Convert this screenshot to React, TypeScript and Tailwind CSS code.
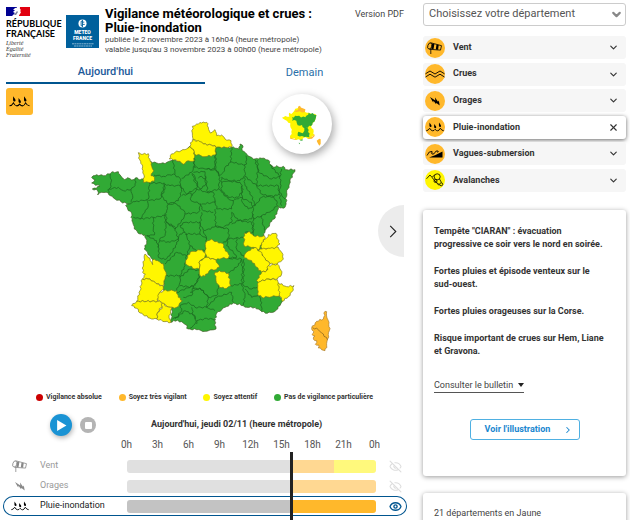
import type { ReactNode } from "react"
import { ChevronDown, ChevronRight, Eye, EyeOff, X } from "lucide-react"

type Pt = [number, number]

const GREEN = "#31aa35"
const YELLOW = "#fff600"
const ORANGE = "#ffb82b"

const FRANCE =
  "20,265 35,257 55,260 74,255 78,251 100,248 108,262 118,272 128,266 140,273 152,266 160,271 175,270 190,240 197,217 215,222 240,224 258,215 264,213 285,217 315,172 328,188 340,180 393,172 440,175 455,178 463,180 465,165 472,168 472,185 485,195 495,203 505,210 520,210 530,208 550,213 558,228 565,235 575,230 582,235 595,232 600,242 630,242 615,275 612,290 605,310 603,340 600,355 585,357 580,352 578,364 568,390 555,400 553,412 540,425 537,440 530,480 550,530 560,590 585,620 592,637 585,650 570,667 547,673 530,668 520,660 510,655 485,655 475,650 445,642 420,655 395,673 389,695 393,720 375,723 360,727 335,722 315,720 305,718 305,708 290,698 265,694 258,700 262,655 235,600 240,550 203,512 195,500 178,480 185,460 180,438 165,435 148,420 143,400 138,385 140,372 130,365 122,350 130,345 108,338 90,330 76,320 70,312 50,310 38,318 38,305 22,300 45,292 20,282 30,272"

const YELLOW_AREAS = [
  // Manche, Seine-Maritime, Nord, Pas-de-Calais, Somme
  "160,191 168,196 190,194 190,205 196,217 200,232 206,245 198,260 208,265 207,277 190,280 175,280 174,270 178,264 174,245 172,228 164,212",
  "253,210 256,200 270,190 300,182 315,172 328,188 328,215 303,218 295,226 285,217 265,213",
  "322,112 335,105 350,102 365,100 370,115 376,132 390,122 395,140 410,138 420,150 438,155 440,175 393,175 390,170 355,165 325,152 322,132",
  "322,152 345,158 355,165 390,170 393,175 390,198 360,203 328,195 328,188 315,172",
  // Sud-Ouest
  "180,495 195,508 203,527 203,512 218,515 235,525 240,545 243,550 240,570 235,590 215,585 195,570 172,570 181,555 173,550 175,525",
  "172,570 195,570 215,585 235,592 235,600 222,615 218,637 155,637 165,605",
  "222,613 235,605 265,605 275,605 280,625 292,635 275,655 262,655 245,652 225,637 218,632",
  "155,637 218,637 228,640 232,650 218,670 215,690 200,690 165,672 155,658 140,650",
  "232,642 245,652 262,655 252,680 258,700 240,698 215,690 218,670 230,660",
  // Massif central
  "302,515 315,490 345,483 362,490 358,508 345,515 343,540 330,540 302,525",
  "360,485 363,460 380,450 390,458 412,463 420,480 433,500 430,508 410,508 393,513 365,505",
  "345,515 365,505 393,513 403,535 390,543 375,543 360,562 345,560 343,540",
  "390,550 403,545 430,553 437,590 425,598 403,595 393,575",
  // Alpes
  "478,433 495,428 505,440 530,443 537,440 540,450 525,475 520,483 505,475 477,470",
  "528,472 535,452 545,447 550,437 573,433 577,450 585,465 575,475 555,480 530,480",
  "525,480 555,478 580,475 590,490 595,510 577,525 555,525 540,508 522,490",
  "500,478 510,475 525,487 540,508 555,525 545,545 530,550 510,530 500,515 478,507 480,495",
  "545,545 550,530 577,525 587,543 590,555 577,570 545,570 520,580 515,575 530,550",
  "518,595 520,580 545,570 577,572 580,582 590,610 585,620 560,623 530,625 518,615",
  "580,582 605,593 627,590 625,603 610,623 592,637 583,615",
]

const CORSE =
  "720,667 725,668 726,687 732,700 733,725 728,750 725,770 720,785 700,777 701,768 691,766 695,755 685,750 690,741 681,736 686,727 680,717 695,697 715,690"

const BORDERS = [
  "76,255 78,280 75,298 68,303 72,312",
  "72,300 100,295 115,305 138,302 150,290 152,268",
  "138,302 143,320 138,340",
  "193,280 190,330 185,332 150,338 130,345",
  "185,332 190,350 180,370 165,390 145,385",
  "195,282 238,282 240,300 225,330 190,335",
  "207,258 235,262 265,255 285,268 287,290 255,290 240,285",
  "264,213 270,255",
  "328,215 325,240 320,250 290,268",
  "240,285 228,320 250,345 280,335 290,308 287,290",
  "285,290 305,315 335,298 338,285 325,255",
  "165,390 205,385 240,380 245,365 250,345",
  "250,345 275,345 300,370 295,390 270,420 245,400 243,375",
  "290,320 318,312 318,335 348,345 340,370 300,375",
  "205,385 205,420 208,438 185,440",
  "238,382 243,405 240,440 225,448 218,475",
  "243,400 268,412 280,450 255,460 225,455",
  "280,450 285,435 300,430 285,410 300,400 345,400",
  "185,440 215,455 222,480 220,505 240,512 255,500 275,465 280,450",
  "300,430 305,440 315,470 305,500 275,490 240,525",
  "300,435 345,435 365,450 360,485 335,485 315,470",
  "345,400 345,435",
  "305,500 300,530 285,560 240,560",
  "285,560 285,580 275,605",
  "285,565 315,540 345,545 340,570 325,595 285,590",
  "275,610 325,590 320,620 295,625",
  "330,590 345,560",
  "400,590 395,620 370,625 345,597 320,600",
  "315,610 345,597 370,625 365,655 330,655 310,640 285,650",
  "365,655 375,645 395,625 440,610 445,640",
  "365,655 390,665",
  "393,692 365,688 335,695 330,705 315,718",
  "270,690 300,665 330,680 335,705",
  "320,655 325,680 330,690",
  "285,650 290,665 275,685 262,690",
  "350,108 355,125 380,140 395,150 393,172",
  "328,200 328,235 360,240 390,240 390,200",
  "393,178 392,215 392,240 405,260 415,250 420,235 437,220 440,175",
  "437,218 475,228 485,225 483,200",
  "478,228 480,260 465,275 430,275 410,265",
  "480,262 515,290 518,240 510,212",
  "517,213 520,250 560,270 585,262 555,228",
  "590,240 585,262 588,290 583,310 600,330",
  "515,290 580,290 582,315 560,325 530,315 515,290",
  "583,315 590,350",
  "510,350 530,325 560,320 575,335 578,352",
  "478,265 480,290 500,320 510,350 490,360 472,340 470,290",
  "410,265 410,280 430,276 465,280 475,300 460,325 430,325 410,305 410,280",
  "365,240 395,245 405,265 400,300 368,310 362,260",
  "325,250 360,248 362,265 360,290 345,300 330,280 322,252",
  "340,268 350,262 362,270",
  "322,320 335,300 365,310 385,310 390,340 350,345",
  "400,300 410,310 430,330 445,335 440,360 395,360 390,335",
  "445,335 465,325 500,340 505,365 500,390 460,395 440,370",
  "390,360 392,412",
  "440,370 440,400 415,415 392,412",
  "345,345 355,365 385,370",
  "392,412 360,425 345,410 350,370",
  "355,425 365,450",
  "392,412 430,420 432,450 412,463",
  "440,405 460,395 500,400 505,430 480,430",
  "475,445 432,450",
  "505,375 505,440",
  "505,390 530,380 560,365 575,352",
  "530,380 535,410 540,425",
  "430,445 425,470 445,490 455,505 430,508",
  "455,447 455,480 478,505",
  "430,508 470,510 460,530 430,553",
  "470,510 472,545 470,585 437,590",
  "477,510 475,590 500,600 518,595",
  "470,585 480,620 475,648",
  "480,600 500,625 520,620 527,630 530,665",
]

const parse = (s: string): Pt[] => s.split(" ").map((p) => p.split(",").map(Number) as Pt)

// Shared borders give the same wobble in both directions
function wobble(a: Pt, b: Pt): Pt[] {
  const flip = a[0] > b[0] || (a[0] === b[0] && a[1] > b[1])
  const [p, q] = flip ? [b, a] : [a, b]
  const dx = q[0] - p[0]
  const dy = q[1] - p[1]
  const len = Math.hypot(dx, dy)
  const n = Math.max(1, Math.round(len / 6))
  const out: Pt[] = []
  for (let i = 1; i < n; i++) {
    const r = Math.sin(p[0] * 12.9 + p[1] * 7.3 + q[0] * 3.1 + i * 41.7) * 2.4
    out.push([p[0] + (dx * i) / n - (dy / len) * r, p[1] + (dy * i) / n + (dx / len) * r])
  }
  return flip ? out.reverse() : out
}

function toPath(s: string, closed = true) {
  const pts = parse(s)
  const all: Pt[] = []
  pts.forEach((p, i) => {
    all.push(p)
    if (i < pts.length - 1) all.push(...wobble(p, pts[i + 1]))
    else if (closed) all.push(...wobble(p, pts[0]))
  })
  return "M" + all.map(([x, y]) => `${x.toFixed(1)} ${y.toFixed(1)}`).join("L") + (closed ? "Z" : "")
}

function FranceMap() {
  return (
    <svg viewBox="-255 -15 1260 870" className="block w-full" role="img" aria-label="Carte de vigilance">
      <g stroke="#3c5a20" strokeWidth="2" strokeLinejoin="round" fill="none">
        <path d={toPath(FRANCE)} fill={GREEN} />
        {BORDERS.map((b) => (
          <path key={b} d={toPath(b, false)} stroke="#1d6b22" strokeWidth="2.4" />
        ))}
        {YELLOW_AREAS.map((a) => (
          <path key={a} d={toPath(a)} fill={YELLOW} stroke="#77761c" />
        ))}
        <path d={toPath(CORSE)} fill={ORANGE} stroke="#a87a2c" />
        <path d={toPath("683,716 700,722 715,735 727,752", false)} stroke="#7d5a1c" />
      </g>
    </svg>
  )
}

function MiniMap() {
  return (
    <svg viewBox="0 0 180 180" className="size-full">
      <path
        fill={YELLOW}
        d={toPath(
          "30,71 40,66 52,68 51,56 58,60 67,50 80,38 92,45 105,56 133,63 127,83 117,96 125,113 127,123 115,133 95,131 85,138 55,133 58,113 55,88 40,78",
        )}
      />
      <path fill={ORANGE} d={toPath("67,52 77,49 78,38 84,35 92,43 100,46 99,54 88,55 78,53")} />
      <path
        fill={GREEN}
        d={toPath(
          "60,70 75,66 100,70 110,56 133,63 127,83 117,96 102,101 110,108 112,130 97,129 90,126 77,125 79,113 92,118 97,110 97,103 90,93 77,94 73,80 60,80",
        )}
      />
      <path fill={GREEN} d="M83 138l8-2 2 3-6 1zM80 146l4 1-2 4z" />
      <path
        fill={ORANGE}
        d="M54 130l9 4 10 2-1 2-17-4zM109 132l12-4 6-7 1 5-8 8-11 1zM142 134l4 2v14l-4 5-5-8-3-7z"
      />
    </svg>
  )
}

type IconProps = { className?: string }

function WindIcon({ className = "size-full" }: IconProps) {
  return (
    <svg viewBox="0 0 20 20" className={className} fill="none" stroke="currentColor">
      <ellipse cx="4.8" cy="8" rx="2" ry="3.2" transform="rotate(18 4.8 8)" strokeWidth=".8" />
      <path d="M5.5 4.7l11 3-1 4.4-11-.8M5.8 11v5" strokeWidth=".8" />
      <path d="M7 5.5l2.4.6-.9 5.2-2.2-.3zM11.5 6.6l2.2.5-.6 4.7-2.3-.2z" fill="currentColor" stroke="none" />
    </svg>
  )
}

function FloodIcon({ className = "size-full" }: IconProps) {
  return (
    <svg viewBox="0 0 20 20" className={className} fill="none" stroke="currentColor" strokeWidth=".9">
      <path d="M.5 9.800L5 7l5 3 5-3 4.500 2.800M.5 13L5 10.200l5 3 5-3 4.500 2.800" strokeLinejoin="round" />
    </svg>
  )
}

function StormIcon({ className = "size-full" }: IconProps) {
  return (
    <svg viewBox="0 0 20 20" className={className} fill="currentColor">
      <path d="M5 6l5.300 3.500-.3-3 3 4.200.8-1.100.9 4.900-3.200-2.500-.6 1-2.400-3.200-.3 1.700z" />
    </svg>
  )
}

function RainFloodIcon({ className = "size-full" }: IconProps) {
  return (
    <svg viewBox="0 0 20 20" className={className}>
      <g fill="currentColor">
        <path d="M4.500 5.500l1.900 2.700q.6 1.700-.6 1.900-1.300.1-1.400-1.500zM9.200 7l1.900 2.500q.5 1.600-.6 1.800-1.300.1-1.400-1.500zM14 5.500l1.900 2.700q.6 1.700-.6 1.900-1.300.1-1.400-1.500z" />
      </g>
      <path
        d="M1.300 13.700q2 0 3.400-2.500 1.300 2.600 3 2.600 1.400 0 2.400-1.500 1.200 1.500 2.500 1.500 1.500 0 2.700-2.600 1.300 2.500 3.400 2.500"
        fill="none"
        stroke="currentColor"
        strokeWidth=".9"
      />
    </svg>
  )
}

function WaveIcon({ className = "size-full" }: IconProps) {
  return (
    <svg viewBox="0 0 20 20" className={className}>
      <path d="M17.500 7.500v6H4l6-2.200z" fill="currentColor" />
      <path
        d="M2 11.500Q4 6.500 7 7.500q1 1-.5 1.200Q6.500 11 9 9.800q2-4 4-2.800.8 1-.6 1.400"
        fill="none"
        stroke="currentColor"
        strokeWidth=".9"
      />
    </svg>
  )
}

function AvalancheIcon({ className = "size-full" }: IconProps) {
  return (
    <svg viewBox="0 0 20 20" className={className} fill="none" stroke="currentColor" strokeWidth=".8">
      <path d="M1.500 8.800L5 5l2 2.300L9.500 5M7 7.500l7 8" />
      <circle cx="12.200" cy="6.800" r="3" />
      <circle cx="10.500" cy="11" r="1.500" />
      <circle cx="16.200" cy="14.300" r="1.500" />
      <path d="M14.500 9l2 3.500M12 12.500l2.500 2.500" />
    </svg>
  )
}

function RepubliqueLogo() {
  return (
    <div className="w-[60px] shrink-0 pt-[7px]">
      <svg viewBox="0 0 24 9" className="block h-[9px] w-6">
        <path fill="#000091" d="M0 0h11v9H0z" />
        <path fill="#e1000f" d="M14 0h10v9H13z" />
        <path fill="#fff" d="M9 1q3-1 4 0l2 2-1 1 1 1-1 2-2 2H6l3-3-2-1 2-2-2 0z" />
        <path fill="#7b7f9c" d="M11 4l1 1-2 3H8z" />
      </svg>
      <div className="mt-[3px] font-['Lato'] text-[9px] leading-[10px] font-bold text-black">
        RÉPUBLIQUE
        <br />
        FRANÇAISE
      </div>
      <div className="mt-px font-['Liberation_Serif'] text-[6px] leading-[6px] text-[#333] italic">
        Liberté
        <br />
        Égalité
        <br />
        Fraternité
      </div>
    </div>
  )
}

function MeteoFranceLogo() {
  return (
    <div className="mt-[15px] mr-[6px] flex size-[33px] shrink-0 flex-col items-center bg-[#00609c] text-white">
      <svg viewBox="0 0 10 10" className="mt-1 size-[9px]">
        <circle cx="5" cy="5" r="4.500" fill="#fff" />
        <path d="M5 1v8M5 2.500H3.500v5H5M5 3.500h2M5 6h2.500" stroke="#00609c" fill="none" />
      </svg>
      <div className="mt-px text-center text-[5px] leading-[6px] font-black">
        METEO
        <br />
        FRANCE
      </div>
      <svg viewBox="0 0 22 4" className="mt-[2px] h-1 w-[22px]" stroke="#a9cbe0" strokeDasharray="2 .4">
        <path d="M0 .8h22M2 3h18" strokeWidth=".8" />
      </svg>
    </div>
  )
}

const LEGEND = [
  { label: "Vigilance absolue", dot: "bg-[#cc0000]" },
  { label: "Soyez très vigilant", dot: "bg-[#ffb82b]" },
  { label: "Soyez attentif", dot: "bg-[#fff600]" },
  { label: "Pas de vigilance particulière", dot: "bg-[#31aa35]" },
]

const HOURS = ["0h", "3h", "6h", "9h", "12h", "15h", "18h", "21h", "0h"]

function TimelineRow({
  label,
  icon,
  active = false,
  children,
}: {
  label: string
  icon: ReactNode
  active?: boolean
  children: ReactNode
}) {
  return (
    <div
      className={
        active
          ? "grid h-5 grid-cols-[124px_1fr_31px] items-center rounded-full text-[#222] shadow-[inset_0_0_0_1px_#00558f]"
          : "grid h-5 grid-cols-[124px_1fr_31px] items-center text-[#999]"
      }
    >
      <div className="flex items-center pl-[7px] text-[9px] whitespace-nowrap">
        <span className={active ? "mr-[10px] size-5 text-black" : "mr-[10px] size-5 text-[#888]"}>{icon}</span>
        {label}
      </div>
      <div className="flex h-[13px] overflow-hidden rounded-[3px]">{children}</div>
      <button
        type="button"
        aria-label={active ? `Masquer ${label}` : `Afficher ${label}`}
        className={active ? "flex justify-center pl-2 text-[#00558f]" : "flex justify-center pl-2 text-[#ddd]"}
      >
        {active ? <Eye size={13} strokeWidth={2.5} /> : <EyeOff size={13} strokeWidth={2} />}
      </button>
    </div>
  )
}

const HAZARDS = [
  { label: "Vent", icon: <WindIcon />, color: "bg-[#ffb82b]" },
  { label: "Crues", icon: <FloodIcon />, color: "bg-[#ffb82b]" },
  { label: "Orages", icon: <StormIcon />, color: "bg-[#ffb82b]" },
  { label: "Pluie-inondation", icon: <RainFloodIcon />, color: "bg-[#ffb82b]", open: true },
  { label: "Vagues-submersion", icon: <WaveIcon />, color: "bg-[#ffb82b]" },
  { label: "Avalanches", icon: <AvalancheIcon />, color: "bg-[#fff600]" },
]

function Timeline() {
  return (
    <section>
      <div className="flex items-center pl-[50px]">
        <button
          type="button"
          aria-label="Lecture"
          className="flex size-[22px] items-center justify-center rounded-full bg-[#1a93d4] shadow-[1px_2px_5px_rgba(0,0,0,0.3)]"
        >
          <svg viewBox="0 0 10 10" className="ml-px size-[11px]">
            <path d="M1 0l8.500 5L1 10z" fill="#fff" />
          </svg>
        </button>
        <button
          type="button"
          aria-label="Arrêt"
          className="ml-2 flex size-4 items-center justify-center rounded-full bg-[#b4b4b4]"
        >
          <span className="size-[7px] rounded-[1px] bg-white" />
        </button>
        <h2 className="ml-[55px] text-[9px] font-bold text-[#333]">Aujourd'hui, jeudi 02/11 (heure métropole)</h2>
      </div>

      <div className="mr-[30px] ml-[111px] flex pt-[2px] text-[10px] leading-[14px] text-[#555]">
        {HOURS.map((h, i) => (
          <span key={i} className="flex-1 text-center">
            {h}
          </span>
        ))}
      </div>

      <div className="relative mr-[13px] ml-[3px] pt-1">
        <TimelineRow label="Vent" icon={<WindIcon />}>
          <div className="w-[66%] bg-[#e0e0e0]" />
          <div className="w-[17%] bg-[#ffd892]" />
          <div className="flex-1 bg-[#fff97c]" />
        </TimelineRow>
        <TimelineRow label="Orages" icon={<StormIcon />}>
          <div className="w-[66%] bg-[#e0e0e0]" />
          <div className="flex-1 bg-[#ffd892]" />
        </TimelineRow>
        <TimelineRow label="Pluie-inondation" icon={<RainFloodIcon />} active>
          <div className="w-[66%] bg-[#c3c3c3]" />
          <div className="flex-1 bg-[#ffb82b]" />
        </TimelineRow>
        <TimelineRow label="Vagues-submersion" icon={<WaveIcon />}>
          <div className="w-[66%] bg-[#e0e0e0]" />
          <div className="flex-1 bg-[#ffd892]" />
        </TimelineRow>
        {/* Current time */}
        <div className="pointer-events-none absolute inset-0 grid grid-cols-[124px_1fr_31px]">
          <div className="col-start-2 w-2/3 border-r-[3px] border-[#222]" />
        </div>
      </div>
    </section>
  )
}

export default function App() {
  return (
    <div className="grid h-screen grid-cols-[2fr_1fr] overflow-hidden bg-white font-['Roboto',sans-serif] text-[#333]">
      <main className="min-w-0">
        <header className="flex h-[62px] pl-[6px]">
          <RepubliqueLogo />
          <MeteoFranceLogo />
          <div className="flex-1 pt-[7px]">
            <div className="flex justify-between pr-4">
              <h1 className="text-[13px] leading-[14px] font-bold text-black">
                Vigilance météorologique et crues :
                <br />
                Pluie-inondation
              </h1>
              <a href="#pdf" className="text-[9px] leading-[14px] text-[#444]">
                Version PDF
              </a>
            </div>
            <p className="text-[8px] leading-[10px] text-[#444]">
              publiée le 2 novembre 2023 à 16h04 (heure métropole)
              <br />
              valable jusqu'au 3 novembre 2023 à 00h00 (heure métropole)
            </p>
          </div>
        </header>

        <nav className="mr-4 ml-[6px] flex h-[22px] text-[11px] leading-5">
          <button type="button" className="flex-1 border-b-2 border-[#00558f] font-medium text-[#1d5a9a]">
            Aujourd'hui
          </button>
          <button type="button" className="flex-1 text-[#2a6fa8]">
            Demain
          </button>
        </nav>

        <section className="relative">
          <FranceMap />
          <div className="absolute top-1 left-[6px] size-[27px] rounded-[3px] bg-[#ffb82b] p-[2px] text-black">
            <RainFloodIcon />
          </div>
          <button
            type="button"
            aria-label="Carte de demain"
            className="absolute top-[10px] right-[88px] size-[60px] rounded-full bg-white shadow-[2px_3px_9px_rgba(0,0,0,0.35)]"
          >
            <MiniMap />
          </button>
          <button
            type="button"
            aria-label="Suivant"
            className="absolute top-[121px] right-4 flex h-[52px] w-[26px] items-center justify-center rounded-l-full bg-[#ececec] text-[#222]"
          >
            <svg viewBox="0 0 8 14" className="ml-1 h-[13px] w-2" fill="none" stroke="currentColor" strokeWidth="1.2">
              <path d="M1 1l6 6-6 6" />
            </svg>
          </button>
        </section>

        <ul className="mt-[18px] mr-[47px] ml-9 flex justify-between text-[7px] leading-[10px] font-bold text-[#333]">
          {LEGEND.map((item) => (
            <li key={item.label} className="flex items-center gap-[3px]">
              <span className={`size-[7px] rounded-full ${item.dot}`} />
              {item.label}
            </li>
          ))}
        </ul>

        <div className="mt-3">
          <Timeline />
        </div>
      </main>

      <aside className="min-w-0 pt-[3px] pr-1 pl-[3px]">
        <div className="relative">
          <select
            aria-label="Département"
            className="block h-[23px] w-full appearance-none rounded-[3px] border border-[#ccc] bg-white pl-[5px] text-[11px] text-[#555]"
          >
            <option>Choisissez votre département</option>
          </select>
          <ChevronDown size={13} strokeWidth={4} className="pointer-events-none absolute top-[5px] right-[3px] text-[#888]" />
        </div>

        <div className="mt-[10px] flex h-[156px] flex-col justify-between">
          {HAZARDS.map((h) => (
            <button
              key={h.label}
              type="button"
              aria-expanded={!!h.open}
              className={
                h.open
                  ? "flex h-[23px] items-center rounded-[3px] bg-white pr-[7px] pl-[2px] shadow-[0_1px_4px_rgba(0,0,0,0.6)]"
                  : "flex h-[23px] items-center rounded-[3px] bg-[#f6f6f6] pr-[7px] pl-[2px]"
              }
            >
              <span className={`size-5 rounded-full text-black ${h.color}`}>{h.icon}</span>
              <span className="ml-2 flex-1 text-left text-[9px] font-bold">{h.label}</span>
              {h.open ? <X size={11} strokeWidth={2.5} /> : <ChevronDown size={11} strokeWidth={2.5} />}
            </button>
          ))}
        </div>

        <article className="mt-[18px] rounded-[3px] px-[11px] pt-[15px] pb-9 shadow-[0_1px_5px_rgba(0,0,0,0.4)]">
          <div className="space-y-[14px] text-[9px] leading-[13px] font-bold">
            <p>
              Tempête "CIARAN" : évacuation
              <br />
              progressive ce soir vers le nord en soirée.
            </p>
            <p>
              Fortes pluies et épisode venteux sur le
              <br />
              sud-ouest.
            </p>
            <p>Fortes pluies orageuses sur la Corse.</p>
            <p>
              Risque important de crues sur Hem, Liane
              <br />
              et Gravona.
            </p>
          </div>
          <button
            type="button"
            className="mt-5 flex items-center gap-[5px] border-b border-[#555] text-[9px] leading-[14px] text-[#444]"
          >
            Consulter le bulletin
            <svg viewBox="0 0 6 4" className="h-1 w-[6px]">
              <path d="M0 0h6L3 4z" fill="#222" />
            </svg>
          </button>
          <a
            href="#illustration"
            className="mx-auto mt-[26px] flex h-[21px] w-[110px] items-center justify-between rounded-[3px] border border-[#4fb0e2] pr-[6px] pl-[14px] text-[9px] font-bold text-[#1a87cf]"
          >
            Voir l'illustration
            <ChevronRight size={10} strokeWidth={2.5} />
          </a>
        </article>

        <article className="mt-[17px] rounded-[3px] px-[11px] pt-[14px] pb-10 text-[9px] leading-[13px] text-[#444] shadow-[0_1px_5px_rgba(0,0,0,0.4)]">
          21 départements en Jaune
        </article>
      </aside>
    </div>
  )
}
